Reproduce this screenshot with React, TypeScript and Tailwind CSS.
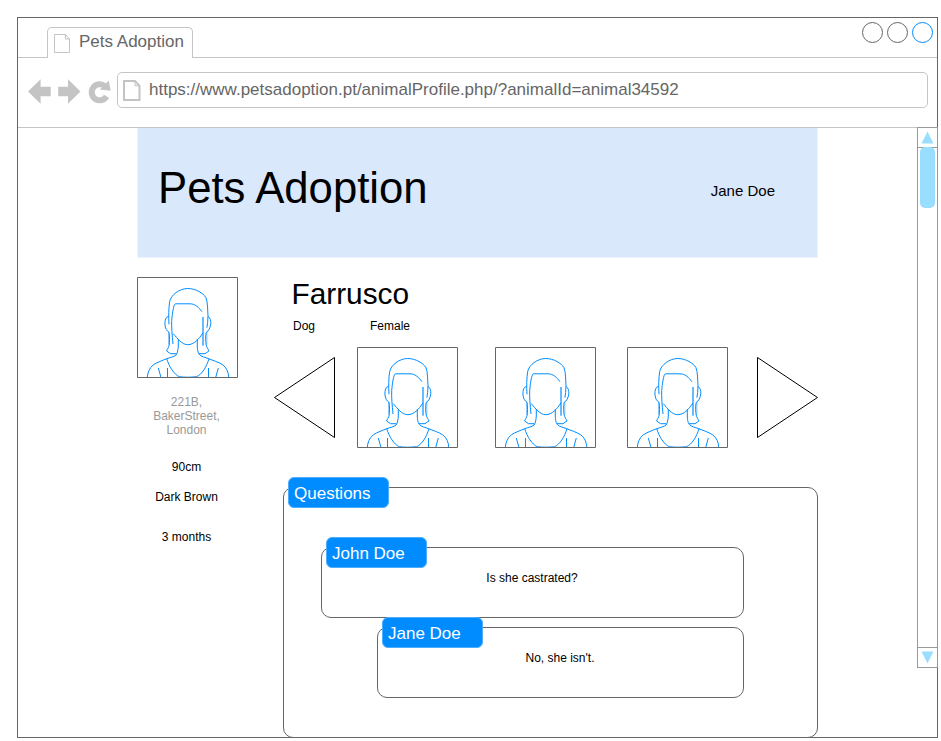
import React from "react";

const sans = "font-['Liberation_Sans',Arial,sans-serif]";

function Avatar() {
  return (
    <svg className="block h-[101px] w-[101px] shrink-0" viewBox="-0.5 -0.5 101 101" fill="none">
      <g stroke="#008cff" strokeWidth="1">
        <path d="M31.5 46.8C31 40 31.1 30 32.2 24C33.5 17.5 42 11 50.2 11C58.4 11 66 16 68.4 20C70.4 25 70 32 70.5 38Q70.3 46 69.4 50.2" />
        <path d="M35.5 66.5C34.6 57 33.9 50 34.2 43C34.8 36 35.8 30 37 27Q37.4 26.3 38.5 26.3H52.5C57.5 26.3 61.2 29.7 64.4 34.2" />
        <path d="M65 39.5V68.2M66 39.5V68.2" strokeOpacity="0.6" />
        <path d="M35.8 56.2C40 61 44.5 67.2 50.2 67.2C56.5 67.2 61.5 61.5 65.4 55.5" />
        <path d="M31 38.8C28 39.5 27.4 43 27.4 46.5C27.6 51 29.4 53.6 31.6 54.8C32.1 60 32.2 64 31.7 67.5C31.2 70 29.6 72 29.1 73.5L33 76.2H38.8" />
        <path d="M70.4 38.8C72.8 40 73.5 43.5 73.3 46C72.9 50.5 71 53.8 68.7 54.8C67.8 60 68.1 64 68.7 67.5C69.2 70 71 72 71.4 73.5L67.5 76.2H61.5" />
        <path d="M31 54.5V67M69.4 54.5V67" strokeOpacity="0.45" />
        <path d="M40.8 61.5V68.5C40.6 72 40 75.5 38.6 77.5C36 79.5 33 79.8 29.2 81.2C25 83 20 84.6 15.8 87.3C12 90.2 10 95.5 9.8 100" />
        <path d="M59.8 61.5V68.5C59.9 72 60.2 74.5 61.8 77C64 79.3 67.5 79.8 71.2 81.2C75 82.8 81 84.6 85.2 87.3C89 90 91.2 95 91.2 100" />
        <path d="M29.2 81.2C31.6 89 36.5 97 41.8 99.2Q46 99.7 50.2 99.7T59 99.2C64.5 97 69.2 89 71.5 81.2" />
        <path d="M20.8 90.5L23.5 100M30 90.5V100M71 90.5V100M80.8 90.5L78.2 100" />
      </g>
      <path d="M0 0H100V100H0Z" stroke="#666666" />
    </svg>
  );
}

function PageIcon({ heavy = false }: { heavy?: boolean }) {
  return heavy ? (
    <svg className="block h-[22px] w-[19px]" viewBox="0 0 19 22" fill="none" stroke="#c4c4c4" strokeWidth="2">
      <path d="M1 1H12L16.5 5.8V20H1Z" />
      <path d="M12 1V5.8H16.5" strokeWidth="1" />
    </svg>
  ) : (
    <svg className="block h-5 w-[17px]" viewBox="0 0 17 20" fill="none" stroke="#c4c4c4">
      <path d="M.5 .5H11.5L15.5 5V18.5H.5Z" />
      <path d="M11.5 .5V5H15.5" />
    </svg>
  );
}

function NavIcons() {
  return (
    <svg className="block h-[26px] w-[83px]" viewBox="28 79 83 26">
      <g fill="#c4c4c4">
        <path d="M28 91.5L40.6 79.3V86.7H50.7V96.2H40.6V103.7Z" />
        <path d="M80.5 91.5L68 79.3V86.7H58.2V96.2H68V103.7Z" />
        <path d="M108.8 80.4L110.6 90.8L99.8 89.4Z" />
      </g>
      <path d="M105 86.3A8 8 0 1 0 106.6 96.4" fill="none" stroke="#c4c4c4" strokeWidth="6" />
    </svg>
  );
}

function Tag({ children }: { children: React.ReactNode }) {
  return (
    <div className="absolute -top-[11px] left-1 h-[31px] w-[101px] rounded-[6px] border border-[#4dadff] bg-[#008cff] pl-[5px] text-left text-[17px] leading-[31px] text-white">
      {children}
    </div>
  );
}

function Message({ author, text, className }: { author: string; text: string; className: string }) {
  return (
    <div className={`relative h-[71px] rounded-[10px] border border-[#666] pt-[23px] pr-px text-center text-xs leading-[14px] ${className}`}>
      <Tag>{author}</Tag>
      {text}
    </div>
  );
}

function ScrollBar() {
  return (
    <div className="absolute top-[109px] -right-px flex h-[541px] w-[21px] flex-col justify-between border border-[#999] bg-white">
      <div className="h-5 border-b border-[#999]">
        <svg className="block h-[19px] w-[19px]" viewBox="918 128 19 19">
          <path d="M927.5 131.5L933.5 143.5H921.5Z" fill="#99ddff" />
        </svg>
      </div>
      <div className="-mt-px ml-0.5 mb-auto h-[61px] w-[15px] rounded-[5px] bg-[#99ddff]" />
      <div className="h-5 border-t border-[#999]">
        <svg className="block h-[19px] w-[19px]" viewBox="918 648 19 19">
          <path d="M921.5 651.5H933.5L927.5 663.5Z" fill="#99ddff" />
        </svg>
      </div>
    </div>
  );
}

export default function App() {
  return (
    <div className={`h-[741px] w-[941px] overflow-hidden bg-white pt-[17px] pl-[17px] text-black ${sans}`}>
      <div className="relative flex h-[721px] w-[921px] flex-col border border-[#666]">
        <div className="flex h-10 shrink-0 justify-between border-b border-[#c4c4c4] pl-[29px]">
          <div className="mt-[9px] -mb-px flex h-[31px] w-[146px] rounded-t-[5px] border border-b-0 border-[#c4c4c4] bg-white pl-[6px] text-[17px] leading-[28px] text-[#666]">
            <div className="mt-[6px] mr-2"><PageIcon /></div>
            Pets Adoption
          </div>
          <div className="mt-1 mr-1 flex gap-1">
            <div className="h-[21px] w-[21px] rounded-full border border-[#666]" />
            <div className="h-[21px] w-[21px] rounded-full border border-[#666]" />
            <div className="h-[21px] w-[21px] rounded-full border border-[#008cff]" />
          </div>
        </div>

        <div className="flex h-[70px] shrink-0 border-b border-[#c4c4c4] pl-[10px]">
          <div className="mt-[21px] mr-[6px]"><NavIcons /></div>
          <div className="mt-[14px] flex h-9 w-[811px] rounded-[5px] border border-[#c4c4c4] pl-[5px] text-[17px] leading-[33px] text-[#666]">
            <div className="mt-[7px] mr-[7px]"><PageIcon heavy /></div>
            https://www.petsadoption.pt/animalProfile.php/?animalId=animal34592
          </div>
        </div>

        <main className="-mb-px ml-[119px] flex w-[681px] grow flex-col">
          <header className="flex h-[130px] shrink-0 items-center justify-between border border-t-0 border-[#ecf3fd] bg-[#dae8fc] pr-[42px] pl-5">
            <h1 className="mt-[-9px] text-[43.7px] leading-[50px]">Pets Adoption</h1>
            <div className="mt-[-2px] text-[15px]">Jane Doe</div>
          </header>

          <div className="flex grow pt-[19px]">
            <aside className="flex w-[101px] shrink-0 flex-col text-center text-xs leading-[14px]">
              <Avatar />
              <div className="pr-0.5">
                <p className="mt-[17px] text-[#999]">221B,<br />BakerStreet,<br />London</p>
                <p className="mt-[23px]">90cm</p>
                <p className="mt-4">Dark Brown</p>
                <p className="mt-[26px]">3 months</p>
              </div>
            </aside>

            <section className="ml-9 flex w-[544px] shrink-0 flex-col">
              <h2 className="ml-[17.5px] h-[42px] text-[29.8px] leading-[34px]">Farrusco</h2>
              <div className="flex h-7 pl-[19px] text-xs leading-[14px]">
                <span className="w-[77px]">Dog</span>
                <span>Female</span>
              </div>
              <div className="flex h-[101px]">
                <svg className="mt-[9px] mr-[22px] block h-[83px] w-[61px]" viewBox="274 356 61 83" fill="none" stroke="#000">
                  <path d="M274.5 397.5L334.5 357.5V437.5Z" />
                </svg>
                <Avatar />
                <div className="ml-[37px]"><Avatar /></div>
                <div className="ml-[31px]"><Avatar /></div>
                <svg className="mt-[9px] ml-[29px] block h-[83px] w-[61px]" viewBox="757 356 61 83" fill="none" stroke="#000">
                  <path d="M817.5 397.5L757.5 357.5V437.5Z" />
                </svg>
              </div>

              <div className="relative mt-[39px] ml-[9px] flex h-[251px] w-[535px] shrink-0 flex-col rounded-[10px] border border-[#666] pt-[59px] pl-[37px]">
                <Tag>Questions</Tag>
                <Message author="John Doe" text="Is she castrated?" className="w-[423px]" />
                <Message author="Jane Doe" text="No, she isn't." className="mt-[9px] ml-14 w-[367px]" />
              </div>
            </section>
          </div>
        </main>
        <ScrollBar />
      </div>
    </div>
  );
}
